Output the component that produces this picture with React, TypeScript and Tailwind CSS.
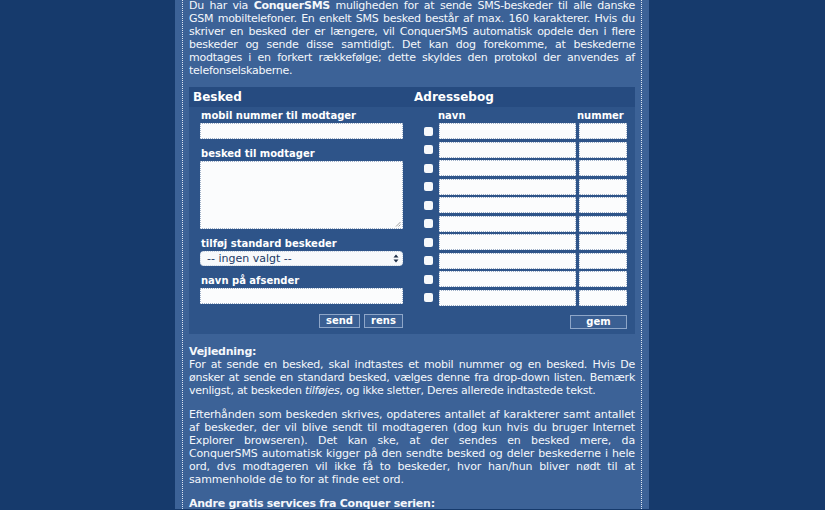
const font = { fontFamily: '"DejaVu Sans", Verdana, sans-serif' };

const Field = ({ className = "" }: { className?: string }) => (
  <div className={`h-[16px] bg-[#fbfcfd] border border-dotted border-[#9fb0c8] ${className}`} />
);

const Btn = ({ label, className = "" }: { label: string; className?: string }) => (
  <div
    className={`h-[14px] border border-[#8ea6c8] bg-[#3a5f93] text-white text-[10px] font-bold leading-[12px] text-center ${className}`}
  >
    {label}
  </div>
);

const rows = Array.from({ length: 10 });

export default function App() {
  return (
    <div className="h-[510px] w-[825px] overflow-hidden bg-[#163a6c]" style={font}>
      <div className="ml-[175px] w-[474px] h-full bg-[#3c6297] px-[7px]">
        <div className="h-full border-x border-dotted border-[#dfe7f2] px-[6px] text-[11px] leading-[13px] tracking-[-0.25px] text-[#f4f7fb] -mt-[1px]">
          <p className="text-justify">
            Du har via <b>ConquerSMS</b> muligheden for at sende SMS-beskeder til alle danske GSM
            mobiltelefoner. En enkelt SMS besked består af max. 160 karakterer. Hvis du skriver en
            besked der er længere, vil ConquerSMS automatisk opdele den i flere beskeder og sende disse
            samtidigt. Det kan dog forekomme, at beskederne modtages i en forkert rækkefølge; dette
            skyldes den protokol der anvendes af telefonselskaberne.
          </p>

          {/* form panel */}
          <div className="mt-[10px] bg-[#2e5489] tracking-normal">
            <div className="flex h-[20px] items-center bg-[#264b80] text-[12px] font-bold text-white">
              <div className="w-[221px] pl-[4px]">Besked</div>
              <div className="pl-[4px]">Adressebog</div>
            </div>
            <div className="flex pb-[5px]">
              {/* left column */}
              <div className="w-[221px] pl-[11px] pr-[4px] pt-[2px] text-[10px] font-bold leading-[14px] text-white">
                <div className="pl-[1px] h-[14px]">mobil nummer til modtager</div>
                <Field />
                <div className="mt-[8px] pl-[1px] h-[14px]">besked til modtager</div>
                <div className="relative h-[68px] bg-[#fbfcfd] border border-dotted border-[#9fb0c8]">
                  <svg className="absolute right-[1px] bottom-[1px]" width="6" height="6" viewBox="0 0 6 6">
                    <path d="M1 5.5 L5.5 1 M3.5 5.5 L5.5 3.5" stroke="#888" strokeWidth="0.8" />
                  </svg>
                </div>
                <div className="mt-[8px] pl-[1px] h-[14px]">tilføj standard beskeder</div>
                <div className="flex h-[15px] items-center justify-between rounded-[4px] bg-[#f7f9fb] border border-dotted border-[#c5d0de] pl-[6px] pr-[3px] text-[11px] font-normal text-[#1c3a66]">
                  <span>-- ingen valgt --</span>
                  <svg width="6" height="9" viewBox="0 0 6 9">
                    <path d="M0.5 3.5 L3 0.5 L5.5 3.5 Z M0.5 5.5 L3 8.5 L5.5 5.5 Z" fill="#1c2d44" />
                  </svg>
                </div>
                <div className="mt-[8px] pl-[1px] h-[14px]">navn på afsender</div>
                <Field />
                <div className="mt-[10px] flex justify-end gap-[4px]">
                  <Btn label="send" className="w-[41px]" />
                  <Btn label="rens" className="w-[39px]" />
                </div>
              </div>

              {/* right column */}
              <div className="flex-1 pt-[2px] pr-[8px] text-[10px] font-bold leading-[14px] text-white">
                <div className="flex h-[14px]">
                  <div className="ml-[31px] w-[139px]">navn</div>
                  <div>nummer</div>
                </div>
                <div className="flex flex-col gap-[2.5px]">
                  {rows.map((_, i) => (
                    <div key={i} className="flex items-center">
                      <span className="ml-[17px] mr-[6px] h-[9px] w-[9px] rounded-[2px] bg-[#f6f8fb]" />
                      <Field className="w-[137px]" />
                      <Field className="ml-[3px] w-[48px]" />
                    </div>
                  ))}
                </div>
                <div className="mt-[9px] flex justify-end">
                  <Btn label="gem" className="w-[57px]" />
                </div>
              </div>
            </div>
          </div>

          <div className="mt-[11px] text-justify">
            <b>Vejledning:</b>
            <br />
            For at sende en besked, skal indtastes et mobil nummer og en besked. Hvis De ønsker at sende
            en standard besked, vælges denne fra drop-down listen. Bemærk venligst, at beskeden{" "}
            <i>tilføjes</i>, og ikke sletter, Deres allerede indtastede tekst.
          </div>
          <p className="mt-[11px] text-justify tracking-[-0.15px]">
            Efterhånden som beskeden skrives, opdateres antallet af karakterer samt antallet af beskeder,
            der vil blive sendt til modtageren (dog kun hvis du bruger Internet Explorer browseren). Det
            kan ske, at der sendes en besked mere, da ConquerSMS{"\u00a0"}automatisk kigger på den sendte
            besked og deler beskederne i hele ord, dvs modtageren vil ikke få to beskeder, hvor han/hun
            bliver nødt til at sammenholde de to for at finde eet ord.
          </p>
          <p className="mt-[11px] font-bold">Andre gratis services fra Conquer serien:</p>
        </div>
      </div>
    </div>
  );
}
